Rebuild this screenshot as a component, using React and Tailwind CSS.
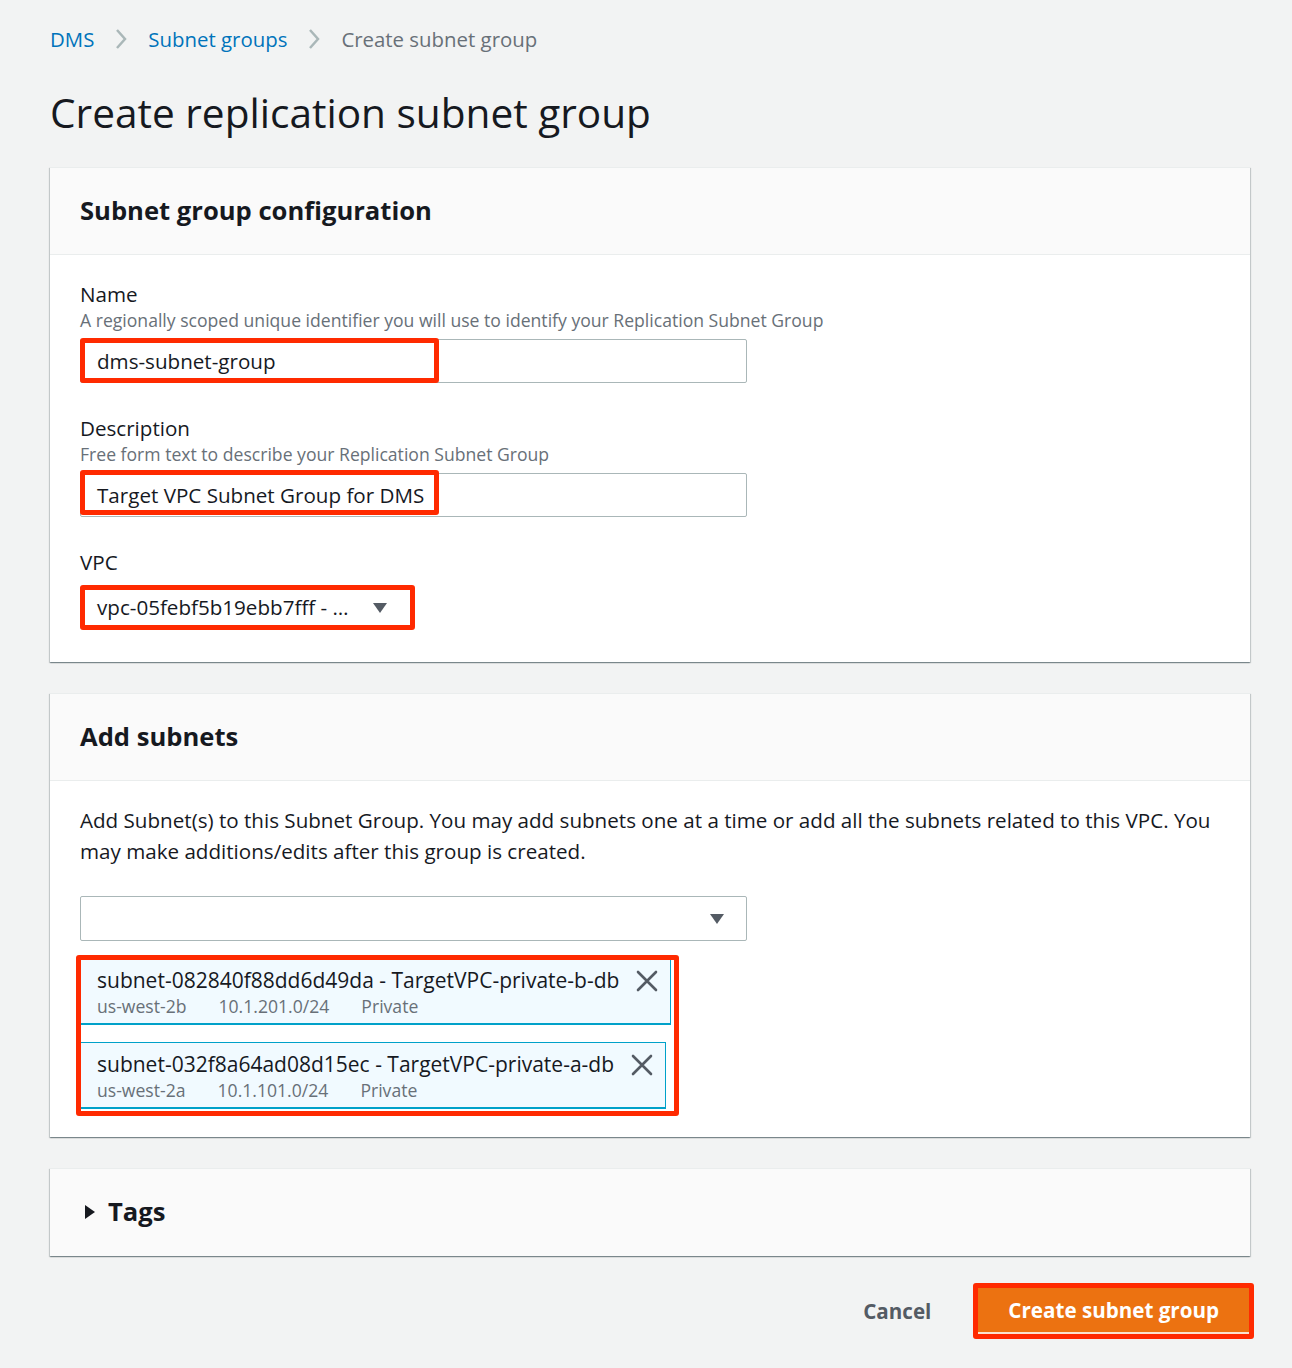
import React from 'react';

const font = { fontFamily: '"Open Sans", "Noto Sans", Arial, sans-serif' };

const Panel = ({ title, children, collapsed }) => (
  <div className="bg-white shadow-[0_1px_1px_0_rgba(0,28,36,0.3),1px_1px_1px_0_rgba(0,28,36,0.15),-1px_1px_1px_0_rgba(0,28,36,0.15)] border-t border-[#eaeded]">
    <div className={`h-[87px] bg-[#fafafa] flex items-center px-[30px] ${collapsed ? '' : 'border-b border-[#eaeded]'}`}>
      {title}
    </div>
    {children}
  </div>
);

const Caret = () => (
  <svg width="16" height="12" viewBox="0 0 16 12" className="fill-[#545b64]">
    <path d="M1 1h14L8 11z" />
  </svg>
);

const Token = ({ id, zone, cidr }) => (
  <div className="inline-flex items-start bg-[#f1faff] border border-[#00a1c9] border-b-2 pl-[16px] pr-[12px] pt-[7px] pb-[5px]">
    <div>
      <div className="text-[21px] leading-[28px] text-[#16191f]">{id}</div>
      <div className="flex gap-[32px] text-[17.6px] leading-[24px] text-[#687078]">
        <span>{zone}</span>
        <span>{cidr}</span>
        <span>Private</span>
      </div>
    </div>
    <svg width="22" height="22" viewBox="0 0 22 22" className="ml-[17px] mt-[4px] stroke-[#545b64]" strokeWidth="2.6" strokeLinecap="round">
      <path d="M2 2l18 18M20 2L2 20" />
    </svg>
  </div>
);

export default function App() {
  return (
    <div className="min-h-[1368px] bg-[#f2f3f3] pl-[50px] pr-[42px] pt-[24px] pb-[28px]" style={font}>
      {/* breadcrumb */}
      <div className="flex items-center h-[30px] text-[20.4px]">
        <span className="text-[#0073bb]">DMS</span>
        <svg width="14" height="24" viewBox="0 0 14 24" className="mx-[20px] stroke-[#aab7b8]" fill="none" strokeWidth="2.5">
          <path d="M3 3l8 9-8 9" />
        </svg>
        <span className="text-[#0073bb]">Subnet groups</span>
        <svg width="14" height="24" viewBox="0 0 14 24" className="mx-[20px] stroke-[#aab7b8]" fill="none" strokeWidth="2.5">
          <path d="M3 3l8 9-8 9" />
        </svg>
        <span className="text-[#687078]">Create subnet group</span>
      </div>

      <h1 className="mt-[35px] text-[40.6px] leading-[48px] text-[#16191f] font-normal">Create replication subnet group</h1>

      <div className="mt-[30px] flex flex-col gap-[31px]">
        <Panel title={<h2 className="text-[25.6px] font-bold text-[#16191f]">Subnet group configuration</h2>}>
          <div className="px-[30px] pt-[25px] pb-[32px]">
            <div className="text-[20.6px] leading-[28px] text-[#16191f]">Name</div>
            <div className="text-[17.6px] leading-[24px] text-[#687078]">A regionally scoped unique identifier you will use to identify your Replication Subnet Group</div>
            <div className="relative mt-[7px] w-[667px] h-[44px] border border-[#aab7b8] rounded-[2px] flex items-center px-[16px] text-[20.6px] text-[#16191f]">
              dms-subnet-group
              <div className="absolute left-[-1px] top-[-2px] w-[359px] h-[45px] border-[5px] border-[#ff2a00] rounded-[3px]" />
            </div>

            <div className="mt-[31px] text-[20.6px] leading-[28px] text-[#16191f]">Description</div>
            <div className="text-[17.6px] leading-[24px] text-[#687078]">Free form text to describe your Replication Subnet Group</div>
            <div className="relative mt-[7px] w-[667px] h-[44px] border border-[#aab7b8] rounded-[2px] flex items-center px-[16px] text-[20.6px] text-[#16191f]">
              Target VPC Subnet Group for DMS
              <div className="absolute left-[-1px] top-[-4px] w-[359px] h-[45px] border-[5px] border-[#ff2a00] rounded-[3px]" />
            </div>

            <div className="mt-[31px] text-[20.6px] leading-[28px] text-[#16191f]">VPC</div>
            <div className="mt-[9px] w-[335px] h-[45px] border-[5px] border-[#ff2a00] rounded-[3px] flex items-center justify-between pl-[12px] pr-[22px] text-[20.6px] text-[#16191f]">
              <span>vpc-05febf5b19ebb7fff - …</span>
              <Caret />
            </div>
          </div>
        </Panel>

        <Panel title={<h2 className="text-[25.6px] font-bold text-[#16191f]">Add subnets</h2>}>
          <div className="px-[30px] pt-[24px] pb-[28px]">
            <p className="text-[20.6px] leading-[31px] text-[#16191f]">
              Add Subnet(s) to this Subnet Group. You may add subnets one at a time or add all the subnets related to this VPC. You may make additions/edits after this group is created.
            </p>
            <div className="mt-[29px] w-[667px] h-[45px] border border-[#aab7b8] rounded-[2px] flex items-center justify-end pr-[21px]">
              <Caret />
            </div>
            <div className="relative mt-[17px] inline-flex flex-col items-start gap-[17px]">
              <Token id="subnet-082840f88dd6d49da - TargetVPC-private-b-db" zone="us-west-2b" cidr="10.1.201.0/24" />
              <Token id="subnet-032f8a64ad08d15ec - TargetVPC-private-a-db" zone="us-west-2a" cidr="10.1.101.0/24" />
              <div className="absolute left-[-4px] top-[-3px] right-[-8px] bottom-[-7px] border-[5px] border-[#ff2a00] rounded-[3px]" />
            </div>
          </div>
        </Panel>

        <Panel
          collapsed
          title={
            <div className="flex items-center gap-[12px] pl-[4px]">
              <svg width="12" height="16" viewBox="0 0 12 16" className="fill-[#16191f]">
                <path d="M1 1l10 7-10 7z" />
              </svg>
              <h2 className="text-[25.6px] font-bold text-[#16191f]">Tags</h2>
            </div>
          }
        />
      </div>

      <div className="mt-[27px] flex items-center justify-end gap-[42px]">
        <button className="text-[20.6px] font-bold text-[#545b64]">Cancel</button>
        <div className="border-[5px] border-[#ff2a00] rounded-[3px] mr-[-4px]">
          <button className="h-[46px] px-[30px] bg-[#ec7211] text-white text-[20.6px] font-bold border-b-2 border-white/80">Create subnet group</button>
        </div>
      </div>
    </div>
  );
}
